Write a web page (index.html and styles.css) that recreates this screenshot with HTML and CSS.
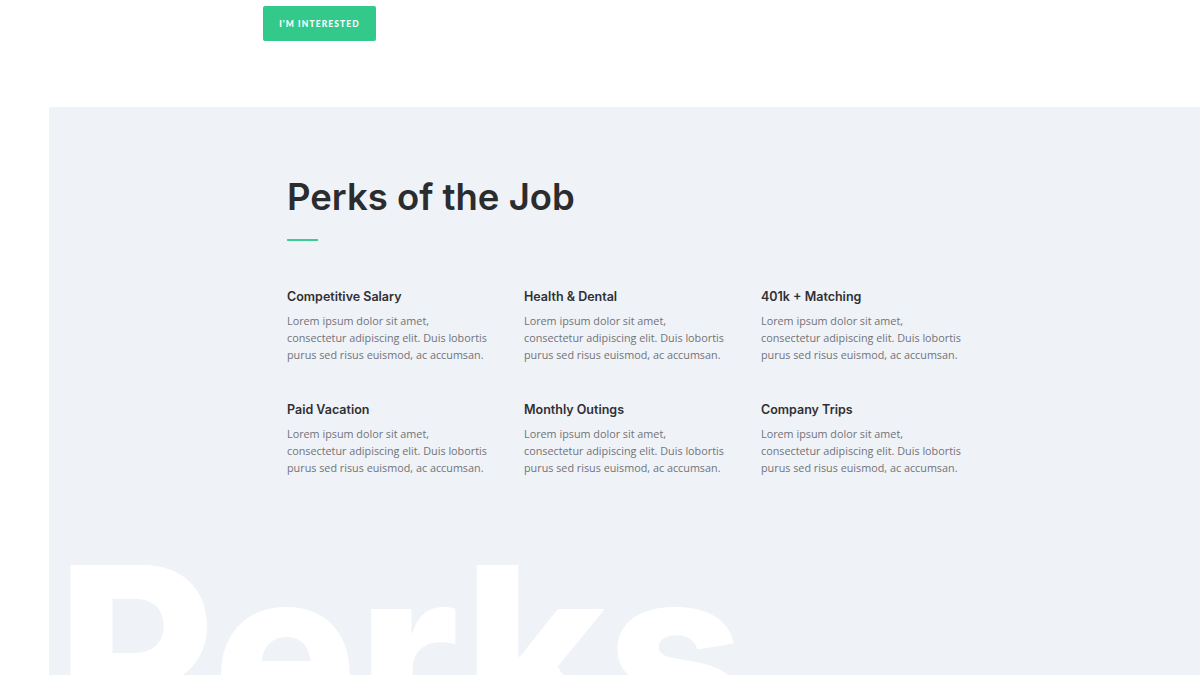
FILE: index.html
```html
<!DOCTYPE html>
<html>
<head>
<meta charset="utf-8">
<link rel="stylesheet" href="styles.css">
</head>
<body>
<div class="top">
  <a class="btn">I'M INTERESTED</a>
</div>
<section class="perks">
  <div class="inner">
    <h1 class="title">Perks of the Job</h1>
    <div class="rule"></div>
    <div class="grid">
      <div class="item">
        <h3>Competitive Salary</h3>
        <p>Lorem ipsum dolor sit amet,<br>consectetur adipiscing elit. Duis lobortis<br>purus sed risus euismod, ac accumsan.</p>
      </div>
      <div class="item">
        <h3>Health &amp; Dental</h3>
        <p>Lorem ipsum dolor sit amet,<br>consectetur adipiscing elit. Duis lobortis<br>purus sed risus euismod, ac accumsan.</p>
      </div>
      <div class="item">
        <h3>401k + Matching</h3>
        <p>Lorem ipsum dolor sit amet,<br>consectetur adipiscing elit. Duis lobortis<br>purus sed risus euismod, ac accumsan.</p>
      </div>
      <div class="item">
        <h3>Paid Vacation</h3>
        <p>Lorem ipsum dolor sit amet,<br>consectetur adipiscing elit. Duis lobortis<br>purus sed risus euismod, ac accumsan.</p>
      </div>
      <div class="item">
        <h3>Monthly Outings</h3>
        <p>Lorem ipsum dolor sit amet,<br>consectetur adipiscing elit. Duis lobortis<br>purus sed risus euismod, ac accumsan.</p>
      </div>
      <div class="item">
        <h3>Company Trips</h3>
        <p>Lorem ipsum dolor sit amet,<br>consectetur adipiscing elit. Duis lobortis<br>purus sed risus euismod, ac accumsan.</p>
      </div>
    </div>
  </div>
  <div class="watermark">Perks</div>
</section>
</body>
</html>
```
FILE: styles.css
```css
html, body {
  margin: 0;
  padding: 0;
  background: #ffffff;
  width: 1200px;
  height: 675px;
  overflow: hidden;
}
body {
  font-family: "Open Sans", "Noto Sans", sans-serif;
}
.top {
  height: 101px;
  padding: 6px 0 0 263px;
}
.btn {
  display: inline-flex;
  align-items: center;
  justify-content: center;
  width: 113px;
  height: 35px;
  background: #33c98b;
  border-radius: 2px;
  color: #ffffff;
  font-family: "Lato", sans-serif;
  font-weight: 900;
  font-size: 8.5px;
  letter-spacing: 1.1px;
}
.perks {
  position: relative;
  margin-left: 49px;
  height: 568px;
  background: #eff2f7;
  overflow: hidden;
}
.inner {
  position: relative;
  z-index: 1;
  padding: 68px 0 0 238px;
}
.title {
  margin: 0;
  font-family: "Inter", sans-serif;
  font-weight: 600;
  font-size: 36.5px;
  line-height: 44px;
  letter-spacing: 0;
  color: #2b2c2e;
}
.rule {
  width: 31px;
  height: 2px;
  background: #3dcf94;
  margin-top: 20px;
}
.grid {
  display: grid;
  grid-template-columns: repeat(3, 237px);
  row-gap: 38px;
  margin-top: 47px;
}
.item h3 {
  margin: 0 0 6px;
  font-family: "Inter", sans-serif;
  font-weight: 600;
  font-size: 12.5px;
  line-height: 18px;
  color: #2f3033;
}
.item p {
  margin: 0;
  font-size: 10.8px;
  line-height: 17px;
  color: #717378;
}
.watermark {
  position: absolute;
  left: 8px;
  top: 425px;
  font-family: "Inter", sans-serif;
  font-weight: 800;
  font-size: 242px;
  line-height: 1;
  letter-spacing: 0;
  color: #ffffff;
}
```
